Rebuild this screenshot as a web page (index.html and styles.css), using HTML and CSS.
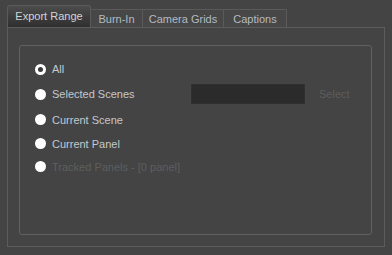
FILE: index.html
```html
<!DOCTYPE html>
<html lang="en">
<head>
    <meta charset="UTF-8">
    <title>Export Range</title>
    <link rel="stylesheet" href="styles.css">
</head>
<body>
    <div class="tabs">
        <div class="tab active">Export Range</div>
        <div class="tab">Burn-In</div>
        <div class="tab">Camera Grids</div>
        <div class="tab">Captions</div>
    </div>
    <div class="pane">
        <div class="group">
            <label class="option">
                <span class="radio checked"></span>
                <span class="label">All</span>
            </label>
            <label class="option">
                <span class="radio"></span>
                <span class="label with-field">Selected Scenes</span>
                <span class="field"></span>
                <span class="select-btn">Select</span>
            </label>
            <label class="option">
                <span class="radio"></span>
                <span class="label">Current Scene</span>
            </label>
            <label class="option">
                <span class="radio"></span>
                <span class="label">Current Panel</span>
            </label>
            <label class="option disabled">
                <span class="radio"></span>
                <span class="label">Tracked Panels - [0 panel]</span>
            </label>
        </div>
    </div>
</body>
</html>
```

FILE: styles.css
```css
body {
    margin: 0;
    padding: 5px 7px 0 7px;
    background-color: #444444;
    font-family: "Liberation Sans", Arial, sans-serif;
    font-size: 11px;
    color: #c3c8ce;
    width: 378px;
}
.tabs {
    display: flex;
    align-items: flex-end;
    height: 22px;
}
.tab {
    height: 18px;
    line-height: 18px;
    text-align: center;
    border: 1px solid #5a5a5a;
    border-bottom: none;
    border-left: none;
    background-color: #474747;
    color: #b4bac2;
    box-sizing: border-box;
}
.tab:nth-child(2) { width: 52px; }
.tab:nth-child(3) { width: 81px; }
.tab:nth-child(4) { width: 63px; }
.tab.active {
    width: 84px;
    height: 22px;
    line-height: 21px;
    border-left: 1px solid #5a5a5a;
    border-radius: 3px 3px 0 0;
    background: linear-gradient(#4c4c4c, #2f2f2f);
    color: #d2d4d6;
}
.pane {
    height: 220px;
    box-sizing: border-box;
    border: 1px solid #5c5c5c;
    padding: 17px 12px 0 11px;
}
.group {
    height: 190px;
    box-sizing: border-box;
    border: 1px solid #616161;
    border-radius: 3px;
    padding: 11px 0 0 15px;
    display: grid;
    grid-template-rows: 24px 26px 25px 23px 23px;
    align-content: start;
}
.option {
    display: flex;
    align-items: center;
}
.radio {
    width: 11px;
    height: 11px;
    border-radius: 50%;
    background-color: #ffffff;
    margin-right: 6px;
    box-sizing: border-box;
}
.radio.checked {
    border: 3px solid #ffffff;
    background-color: #3a3a3a;
}
.label.with-field {
    width: 139px;
}
.field {
    width: 114px;
    height: 20px;
    background-color: #2b2b2b;
    border: 1px solid #303030;
    box-sizing: border-box;
}
.select-btn {
    margin-left: 14px;
    color: #5c5c5c;
}
.disabled .label {
    color: #5e5e5e;
}
```
